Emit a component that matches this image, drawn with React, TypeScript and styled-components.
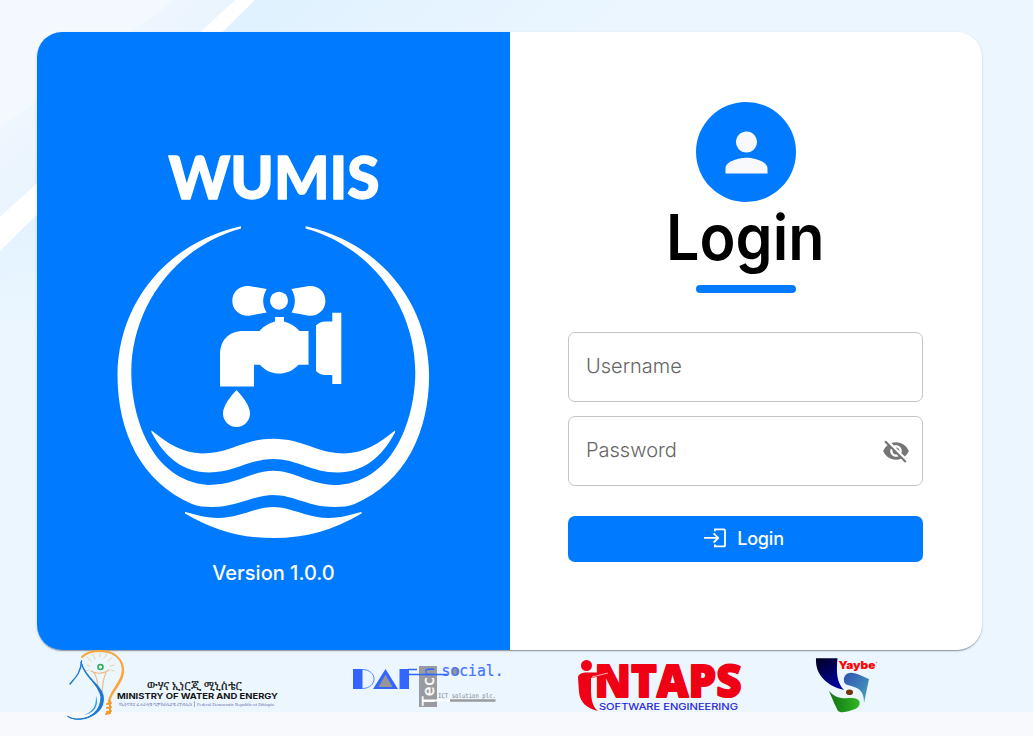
import React from 'react';
import styled, { createGlobalStyle } from 'styled-components';
import { MdPerson, MdVisibilityOff } from 'react-icons/md';

const GlobalStyle = createGlobalStyle`
  * { box-sizing: border-box; }
  body { margin: 0; background: #f8f9fd; font-family: Inter, sans-serif; }
`;

const Page = styled.main`
  position: relative;
  height: 736px;
  overflow: hidden;
  padding: 32px 51px 0 37px;
`;

const Backdrop = styled.svg`
  position: absolute;
  top: 0;
  left: 0;
  z-index: -1;
`;

const Card = styled.section`
  display: grid;
  grid-template-columns: 473px minmax(0, 1fr);
  height: 618px;
  border-radius: 25px;
  overflow: hidden;
  background: #fff;
  box-shadow: 0 2px 1px -1px rgba(0, 0, 0, 0.2), 0 1px 1px 0 rgba(0, 0, 0, 0.14),
    0 1px 3px 0 rgba(0, 0, 0, 0.12);
`;

const BrandPanel = styled.div`
  display: flex;
  flex-direction: column;
  align-items: center;
  background: #007bff;
  color: #fff;
  padding-top: 108px;
`;

const Version = styled.p`
  margin: 16px 0 0;
  font-size: 20px;
  line-height: 30px;
  font-weight: 500;
`;

const FormPanel = styled.form`
  display: flex;
  flex-direction: column;
  align-items: center;
  padding: 70px 59px 0 58px;
`;

const Avatar = styled.div`
  display: flex;
  align-items: center;
  justify-content: center;
  width: 100px;
  height: 100px;
  padding-left: 1px;
  border-radius: 50%;
  background: #007bff;
  color: #f8f9fd;
  font-size: 63px;
`;

const Title = styled.h1`
  margin: 0;
  height: 75px;
  font-size: 63px;
  line-height: 71px;
  font-weight: 640;
  transform: scaleX(0.94);
  color: #000;
`;

const Underline = styled.div`
  width: 100px;
  height: 8px;
  margin: 8px 0 39px;
  border-radius: 4px;
  background: #007bff;
`;

const Field = styled.div`
  display: flex;
  align-items: center;
  width: 100%;
  height: 70px;
  margin-bottom: 14px;
  padding: 0 12px 0 17px;
  border: 1px solid #c4c4c4;
  border-radius: 7px;
  color: #757575;
  font-size: 28px;
`;

const Input = styled.input`
  flex: 1;
  min-width: 0;
  border: 0;
  padding: 0 0 2px;
  outline: none;
  background: none;
  font: 340 20px Inter, sans-serif;
  &::placeholder { color: #666; opacity: 1; }
`;

const SubmitButton = styled.button`
  display: flex;
  align-items: center;
  justify-content: center;
  gap: 11px;
  width: 100%;
  height: 46px;
  margin-top: 16px;
  padding: 0 3px 2px 0;
  border: 0;
  border-radius: 7px;
  background: #007bff;
  color: #fff;
  font: 500 18px Inter, sans-serif;
  letter-spacing: -0.2px;
`;

const Partners = styled.footer`
  display: flex;
  align-items: flex-start;
  padding-left: 29px;
`;

const PartnerLogo = styled.svg<{ $gap: number }>`
  flex: none;
  overflow: visible;
  margin-right: ${(p) => p.$gap}px;
`;

const RING =
  'M241 226.2C165 243 118 305 117.5 375C117.5 432 141 482 192 504C198 506.4 204 507 212 507C239 507 252 495 274 495V470.7C251 470.7 238 485 208 485C150 480 131.3 415 131.3 372C131.3 310 172 248 241 228.5Z';
const WAVE =
  'M151.6 430.6C167 443 182 453.4 202 453.4C231 453.4 242 438.7 274 438.7V459C249 459 235 472.5 209 472.5C184 472.5 165 458 151.4 432Z';
const BASE =
  'M185 512C194 514 205 518 218 518C240 518 255 507 274 507V538C240 538 213 530 185 513.4Z';

function HalfEmblem() {
  return (
    <>
      <path d={RING} />
      <path d={WAVE} />
      <path d={BASE} />
    </>
  );
}

function Emblem() {
  return (
    <svg width="321" height="402" viewBox="113 140 321 402" fill="#fff">
      <text x="168.5" y="199.3" fontFamily="Lato" fontWeight="900" fontSize="59.5" stroke="#fff" strokeWidth="1.4" strokeLinejoin="round" textLength="211" lengthAdjust="spacingAndGlyphs">WUMIS</text>
      <HalfEmblem />
      <g transform="translate(546.6 0) scale(-1 1)">
        <HalfEmblem />
      </g>
      <circle cx="279" cy="300.7" r="9" />
      <path d="M266.7 289L249 286C239 285.4 232.3 292 232.3 301C232.3 310 240 316.3 249 315.7L266.7 312.6C262 305 262 297 266.7 289Z" />
      <path d="M291.5 289L309 286C319 285.4 325.4 292 325.4 301C325.4 310 318 316.3 309 315.7L291.5 312.6C296 305 296 297 291.5 289Z" />
      <path d="M275 317H284V321.5C290 323 295 326 299.5 331H308.5V364.7H298.5C288 376.5 270 376.5 260 364.7H254V386.5H220V355C220 340 229 331 243 331H259.5C264 326 269 323 275 321.5Z" />
      <path d="M316 325.5Q320 321.5 325 321.5H332.3V312.7H341.3V384H332.3V375H325Q320 375 316 371Z" />
      <path d="M236.5 390C243 397 250 406 250 413.5C250 421 244 427 236.5 427C229 427 223 421 223 413.5C223 406 230 397 236.5 390Z" />
    </svg>
  );
}

function LoginIcon() {
  return (
    <svg width="22" height="20" viewBox="0 0 22 20" fill="none" stroke="#fff" strokeWidth="1.8">
      <path d="M10.9 3.2V1.4H20Q21 1.4 21 2.4V17.4Q21 18.4 20 18.4H10.9V16.6" />
      <path d="M0 9.9H13.5M9.6 5.3L14.2 9.9L9.6 14.5" />
    </svg>
  );
}

function MinistryLogo() {
  return (
    <PartnerLogo $gap={72} width="214" height="72" viewBox="66 650 214 72">
      <g fill="none" strokeLinecap="round">
        <path d="M82 657C90 649 112 648 120 660C131 678 110 690 109 702" stroke="#f9a63a" strokeWidth="2" />
        <path d="M121 662C128 679 109 690 109 702" stroke="#f9a63a" strokeWidth="1.5" />
        <path d="M110 701V713L106 714M107 704L111 703M107 708L111 707M107 712L111 711" stroke="#f59b25" strokeWidth="2" />
        <path d="M91 671C97 675 105 673 109 670M94 673C98 678 97 684 99 692M106 673C103 678 103 684 102 692" stroke="#eeb985" strokeWidth="1.2" />
        <path d="M90 666L87 665M91 661L87 657M95 659L93 654M100 657V653M104 658L107 654M108 661L112 658M110 666L114 665M89 670L86 671M111 670L114 671" stroke="#edc79c" strokeWidth="0.9" />
        <circle cx="100.5" cy="667" r="2.5" stroke="#2daa53" strokeWidth="1.6" />
        <path d="M70 684C75 678 81 673 81.5 661" stroke="#1878d2" strokeWidth="1.4" />
      </g>
      <path d="M81 662C84 677 99 684 101 697C101 710 91 719 78 719C73 719 69 718 67.5 716C73 720 80 720 87 718C99 714 105 706 103 695C100 684 86 678 81 662Z" fill="#1878d2" stroke="#1878d2" />
      <path d="M96 696C100 707 92 714 84 715C94 711 96 706 96 696Z" fill="#3e9be5" />
      <text x="147" y="689.5" fontFamily="'Noto Serif Ethiopic', 'Noto Sans Ethiopic', serif" fontSize="11" fill="#111" stroke="#111" strokeWidth="0.2" textLength="95" lengthAdjust="spacingAndGlyphs">ውሃና ኢነርጂ ሚኒስቴር</text>
      <text x="117" y="698.8" fontFamily="Inter, sans-serif" fontSize="7.8" fontWeight="700" fill="#151515" textLength="161" lengthAdjust="spacingAndGlyphs">MINISTRY OF WATER AND ENERGY</text>
      <text x="119" y="705.8" fontFamily="'Noto Serif Ethiopic', serif" fontSize="4.5" fill="#6469ad" textLength="73" lengthAdjust="spacingAndGlyphs">የኢትዮጵያ ፌዴራላዊ ዲሞክራሲያዊ ሪፐብሊክ</text>
      <path d="M194.5 701V707" stroke="#7777aa" strokeWidth="0.6" />
      <text x="197" y="705.8" fontFamily="'Liberation Serif', serif" fontSize="5" fill="#6469ad" textLength="77" lengthAdjust="spacingAndGlyphs">Federal Democratic Republic of Ethiopia</text>
    </PartnerLogo>
  );
}

function DafLogo() {
  return (
    <PartnerLogo $gap={74} width="150" height="60" viewBox="352 650 150 60">
      <path d="M353 669H362.5V689H353Z" fill="#3366ff" />
      <path d="M362 669.5C378 669.5 378 688.5 362 688.5" fill="none" stroke="#5c85ff" />
      <path d="M385.5 669L398 689H373Z" fill="#3366ff" />
      <path d="M385.5 674.5L392.5 687H378.5Z" fill="#969696" />
      <path d="M399.5 669H409V689H399.5Z" fill="#3366ff" />
      <path d="M419 666H437V707H419Z" fill="#999b9e" />
      <path d="M408 669.5H417M408 674.5H448" stroke="#3366ff" strokeWidth="1.5" fill="none" />
      <text transform="translate(434 706) rotate(-90)" fontFamily="'DejaVu Sans Mono'" fontSize="16.5" fill="#fff" stroke="#fff" strokeWidth="0.3" textLength="39" lengthAdjust="spacingAndGlyphs">Tec<tspan fill="#3366ff" stroke="none">n</tspan></text>
      <ellipse cx="456" cy="671.5" rx="3.5" ry="4" fill="#969696" />
      <text x="441.5" y="676" fontFamily="'DejaVu Sans Mono'" fontSize="16" fill="#4473ff" stroke="#4473ff" strokeWidth="0.2" textLength="62" lengthAdjust="spacingAndGlyphs">social.</text>
      <text x="438" y="698" fontFamily="'DejaVu Sans Mono'" fontSize="6.5" fill="#85888d" textLength="58" lengthAdjust="spacingAndGlyphs">ICT solution plc.</text>
      <path d="M422 700.5H450" stroke="#fff" strokeWidth="2" />
      <path d="M450 700.5H495.5" stroke="#999b9e" strokeWidth="2.5" />
    </PartnerLogo>
  );
}

function IntapsLogo() {
  return (
    <PartnerLogo $gap={72} width="167" height="64" viewBox="576 650 167 64">
      <g fill="#ef0014">
        <circle cx="586.5" cy="665.5" r="5.5" />
        <path d="M578 678C578 674 582 672.5 587 672.5H602L608 672L607 675L591 678V690C591 702 594 708 598 711C586 708 580 702 579 692Z" />
      </g>
      <text x="594.5" y="697" fontFamily="'Open Sans', sans-serif" fontSize="44" fontWeight="800" fill="#ef0014" stroke="#ef0014" strokeWidth="1.8" strokeLinejoin="round" textLength="147" lengthAdjust="spacingAndGlyphs">NTAPS</text>
      <path d="M592 677L608 673" stroke="#ffd7db" strokeWidth="0.8" />
      <text x="599" y="710" fontFamily="Inter, sans-serif" fontSize="9.6" fill="#1d16dc" stroke="#1d16dc" strokeWidth="0.15" textLength="139" lengthAdjust="spacingAndGlyphs">SOFTWARE ENGINEERING</text>
    </PartnerLogo>
  );
}

function YaybeLogo() {
  return (
    <PartnerLogo $gap={0} width="64" height="64" viewBox="815 650 64 64">
      <defs>
        <linearGradient id="navy" x1="0" y1="0" x2="0.6" y2="1">
          <stop stopColor="#000020" /><stop offset="1" stopColor="#0000a0" />
        </linearGradient>
        <linearGradient id="sky" x1="0" y1="0" x2="1" y2="1">
          <stop stopColor="#3150ad" /><stop offset="1" stopColor="#46a8c5" />
        </linearGradient>
        <linearGradient id="leaf">
          <stop stopColor="#117012" /><stop offset="1" stopColor="#30b823" />
        </linearGradient>
      </defs>
      <path d="M816 658.3H837.5C836 673 837 683 844 690C827 686 815 675 816 658.3Z" fill="url(#navy)" />
      <path d="M844 681C843 676 847 672.7 851 672.7C857 673 864 677 869 679L864 703C864 692 860 689 854 687C849 685 844 685 844 681Z" fill="url(#sky)" />
      <path d="M829 691C837 700 845 698 852 698C860 698 862 704 857 708C853 710 845 713 840 712C837 711 837 708 835 705Z" fill="url(#leaf)" />
      <ellipse cx="849.5" cy="692.2" rx="3.5" ry="2.8" fill="#743600" />
      <text x="838.5" y="669.3" fontFamily="Inter, sans-serif" fontSize="11" fontWeight="900" fill="#ff0505" textLength="37" lengthAdjust="spacingAndGlyphs">Yaybe</text>
      <circle cx="876.5" cy="662.5" r="0.7" fill="#ff7777" />
    </PartnerLogo>
  );
}

export default function App() {
  return (
    <>
      <GlobalStyle />
      <Page>
        <Backdrop width="1033" height="712" viewBox="0 0 1033 712">
          <defs>
            <linearGradient id="base" gradientUnits="userSpaceOnUse" x1="120" y1="120" x2="330" y2="320">
              <stop stopColor="#dff1ff" /><stop offset="1" stopColor="#ebf6ff" />
            </linearGradient>
            <linearGradient id="lower" x1="0" y1="0" x2="0" y2="1">
              <stop stopColor="#e9f5ff" stopOpacity="0.3" /><stop offset="1" stopColor="#ebf6ff" />
            </linearGradient>
            <linearGradient id="haze" gradientUnits="userSpaceOnUse" x1="60" y1="60" x2="120" y2="130">
              <stop stopColor="#f0f7fe" /><stop offset="1" stopColor="#e8f4fe" />
            </linearGradient>
          </defs>
          <rect width="1033" height="712" fill="url(#base)" />
          <rect y="200" width="60" height="130" fill="url(#lower)" />
          <rect y="330" width="60" height="382" fill="#ebf6ff" />
          <path d="M0 0H235L0 217Z" fill="url(#haze)" />
          <path d="M0 0H175L0 128Z" fill="#f4f9ff" />
          <path d="M235 0H255L0 251V217Z" fill="#fff" />
        </Backdrop>
        <Card>
          <BrandPanel>
            <Emblem />
            <Version>Version 1.0.0</Version>
          </BrandPanel>
          <FormPanel>
            <Avatar><MdPerson /></Avatar>
            <Title>Login</Title>
            <Underline />
            <Field><Input placeholder="Username" /></Field>
            <Field><Input type="password" placeholder="Password" /><MdVisibilityOff /></Field>
            <SubmitButton type="button"><LoginIcon />Login</SubmitButton>
          </FormPanel>
        </Card>
        <Partners>
          <MinistryLogo />
          <DafLogo />
          <IntapsLogo />
          <YaybeLogo />
        </Partners>
      </Page>
    </>
  );
}
